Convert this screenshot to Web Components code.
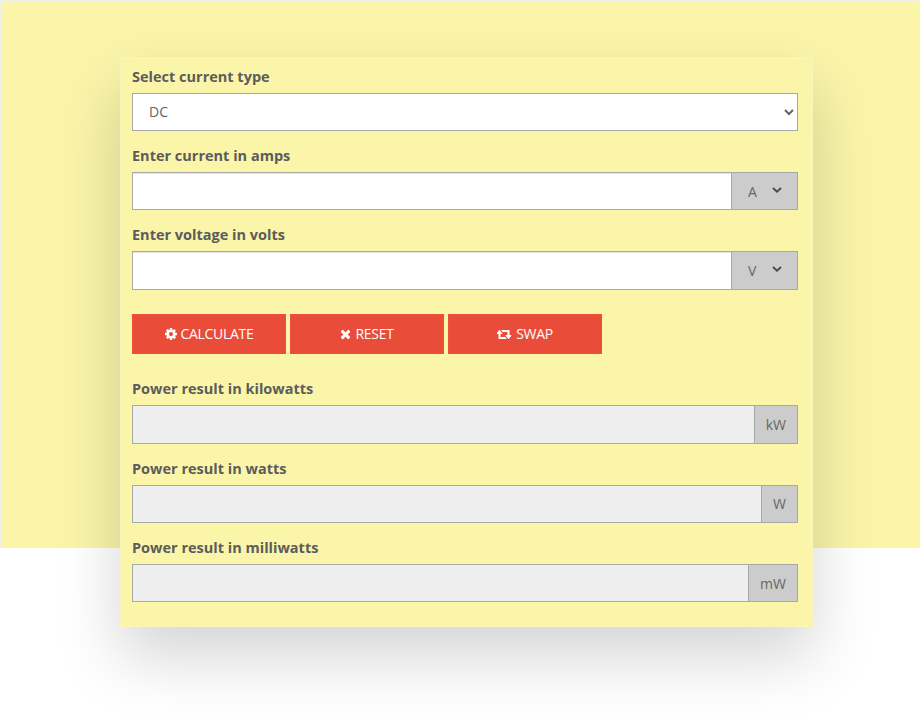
<!DOCTYPE html>
<html lang="en">
<head>
<meta charset="utf-8">
<title>Power calculator</title>
<style>
html,body{margin:0;padding:0;background:#fff;}
body{font-family:"Open Sans","Liberation Sans",sans-serif;overflow:hidden;height:718px;}
</style>
</head>
<body>
<power-page>
  <calc-card>
    <calc-field label="Select current type"></calc-field>
    <calc-field label="Enter current in amps" kind="input" options="A,mA,kA"></calc-field>
    <calc-field label="Enter voltage in volts" kind="input" options="V,mV,kV"></calc-field>
    <calc-actions>
      <calc-button icon="cog">CALCULATE</calc-button>
      <calc-button icon="times">RESET</calc-button>
      <calc-button icon="retweet">SWAP</calc-button>
    </calc-actions>
    <calc-field label="Power result in kilowatts" kind="output" unit="kW"></calc-field>
    <calc-field label="Power result in watts" kind="output" unit="W"></calc-field>
    <calc-field label="Power result in milliwatts" kind="output" unit="mW"></calc-field>
  </calc-card>
</power-page>
<script>
const ICONS={
cog:['0 0 1536 1792','M1024 896q0-106-75-181t-181-75-181 75-75 181 75 181 181 75 181-75 75-181zm512-109v222q0 12-8 23t-20 13l-185 28q-19 54-39 91 35 50 107 138 10 12 10 25t-9 23q-27 37-99 108t-94 71q-12 0-26-9l-138-108q-44 23-91 38-16 136-29 186-7 28-36 28h-222q-14 0-24.5-8.5t-11.5-21.5l-28-184q-49-16-90-37l-141 107q-10 9-25 9-14 0-25-11-126-114-165-168-7-10-7-23 0-12 8-23 15-21 51-66.5t54-70.5q-27-50-41-99l-183-27q-13-2-21-12.5t-8-23.5v-222q0-12 8-23t19-13l186-28q14-46 39-92-40-57-107-138-10-12-10-24 0-10 9-23 26-36 98.5-107.5t94.5-71.5q13 0 26 10l138 107q44-23 91-38 16-136 29-186 7-28 36-28h222q14 0 24.5 8.5t11.5 21.5l28 184q49 16 90 37l142-107q9-9 24-9 13 0 25 10 129 119 165 170 7 8 7 22 0 12-8 23-15 21-51 66.5t-54 70.5q26 50 41 98l183 28q13 2 21 12.5t8 23.5z'],
times:['0 0 1408 1792','M1298 1322q0 40-28 68l-136 136q-28 28-68 28t-68-28l-294-294-294 294q-28 28-68 28t-68-28l-136-136q-28-28-28-68t28-68l294-294-294-294q-28-28-28-68t28-68l136-136q28-28 68-28t68 28l294 294 294-294q28-28 68-28t68 28l136 136q28 28 28 68t-28 68l-294 294 294 294q28 28 28 68z'],
retweet:['0 0 1920 1792','M1216 1504q0 13-9.5 22.5t-22.5 9.5h-960q-8 0-13.5-2t-9-7-5.5-8-3-11.5-1-11.5v-600h-192q-26 0-45-19t-19-45q0-24 15-41l320-384q19-22 49-22t49 22l320 384q15 17 15 41 0 26-19 45t-45 19h-192v384h576q16 0 25 11l160 192q7 10 7 21zm640-416q0 24-15 41l-320 384q-20 23-49 23t-49-23l-320-384q-15-17-15-41 0-26 19-45t45-19h192v-384h-576q-16 0-25-12l-160-192q-7-9-7-20 0-13 9.5-22.5t22.5-9.5h960q8 0 13.5 2t9 7 5.5 8 3 11.5 1 11.5v600h192q26 0 45 19t19 45z']
};
class PowerPage extends HTMLElement{
  constructor(){super();this.attachShadow({mode:'open'}).innerHTML=`<style>
  :host{display:grid;width:920px;height:718px;grid-template-columns:1fr;grid-template-rows:548px 170px;font-family:"Open Sans","Liberation Sans",sans-serif;}
  .band{grid-area:1/1/2/2;background:#faf5a9;border:1px solid #f0f0f0;border-bottom:0;box-sizing:border-box;}
  .holder{grid-area:1/1/3/2;padding:57px 107px 0 120px;z-index:1;}
  </style><div class="band"></div><div class="holder"><slot></slot></div>`;}
}
class CalcCard extends HTMLElement{
  constructor(){super();this.attachShadow({mode:'open'}).innerHTML=`<style>
  :host{display:block;box-sizing:border-box;height:570px;padding:10.8px 14px 0 11px;background:#faf5a9;border:1px solid #f9f6ba;box-shadow:0 30px 60px rgba(0,0,0,.17);}
  </style><slot></slot>`;}
}
class CalcField extends HTMLElement{
  connectedCallback(){
    if(this.shadowRoot)return;
    const kind=this.getAttribute('kind')||'select',unit=this.getAttribute('unit')||'',opts=(this.getAttribute('options')||'').split(',');
    let control='';
    if(kind==='select'){
      control=`<select class="main sel"><option>DC</option><option>AC single phase</option><option>AC three phase</option></select>`;
    }else{
      const addon=kind==='input'
        ?`<span class="unitwrap"><select class="unit">${opts.map(o=>`<option>${o}</option>`).join('')}</select><svg viewBox="0 0 10 6" aria-hidden="true"><path d="M1 1l4 3.6L9 1" fill="none" stroke="#4a4a4a" stroke-width="1.9"/></svg></span>`
        :`<span class="addon">${unit}</span>`;
      control=`<div class="group"><input class="main ${kind==='output'?'ro':''}" type="text" ${kind==='output'?'readonly':''}>${addon}</div>`;
    }
    this.attachShadow({mode:'open'}).innerHTML=`<style>
    :host{display:block;margin-bottom:16.9px;}
    label{display:block;height:24px;line-height:16px;font-size:14.5px;font-weight:700;color:#5c5c5c;}
    .main{box-sizing:border-box;height:38.4px;width:100%;min-width:0;border:1px solid #a9a9a9;background:#fff;border-radius:0;font:14px "Open Sans","Liberation Sans",sans-serif;color:#666;padding:0 12px;margin:0;outline:0;display:block;box-shadow:inset 0 1px 0 #e4e4e4;}
    .sel{box-shadow:none;}
    .group{display:flex;height:38.4px;}
    .group .main{flex:1;}
    .ro{background:#eee;box-shadow:none;}
    .unitwrap{position:relative;display:block;flex:none;width:66px;height:38.4px;}
    .unitwrap svg{position:absolute;left:40px;top:15px;width:10px;height:6px;pointer-events:none;}
    .unit,.addon{box-sizing:border-box;height:38.4px;background:#ccc;border:1px solid #a9a9a9;border-left:0;font:14px "Open Sans","Liberation Sans",sans-serif;color:#666;border-radius:0;margin:0;}
    .unit{appearance:none;-webkit-appearance:none;display:block;width:66px;padding:0 0 0 16px;outline:0;}
    .addon{display:flex;align-items:center;justify-content:center;padding:0 11px;border-left:1px solid #a9a9a9;margin-left:-1px;}
    </style><label>${this.getAttribute('label')}</label>${control}`;
  }
}
class CalcActions extends HTMLElement{
  constructor(){super();this.attachShadow({mode:'open'}).innerHTML=`<style>
  :host{display:flex;gap:4px;margin:24.2px 0 27.4px;}
  </style><slot></slot>`;}
}
class CalcButton extends HTMLElement{
  connectedCallback(){
    if(this.shadowRoot)return;
    const [vb,d]=ICONS[this.getAttribute('icon')];
    const w=vb.split(' ')[2]/1792*14;
    this.attachShadow({mode:'open'}).innerHTML=`<style>
    :host{display:block;}
    button{box-sizing:border-box;width:154px;height:40px;background:#ea4c3a;border:1px solid #ef4f3b;color:#fff;font:14px "Open Sans","Liberation Sans",sans-serif;letter-spacing:-.3px;display:flex;align-items:center;justify-content:center;gap:4px;padding:0;border-radius:0;}
    svg{width:${w}px;height:14px;fill:#fff;display:block;flex:none;}
    </style><button type="button"><svg viewBox="${vb}" aria-hidden="true"><path d="${d}"/></svg><slot></slot></button>`;
  }
}
customElements.define('power-page',PowerPage);
customElements.define('calc-card',CalcCard);
customElements.define('calc-field',CalcField);
customElements.define('calc-actions',CalcActions);
customElements.define('calc-button',CalcButton);
</script>
</body>
</html>
